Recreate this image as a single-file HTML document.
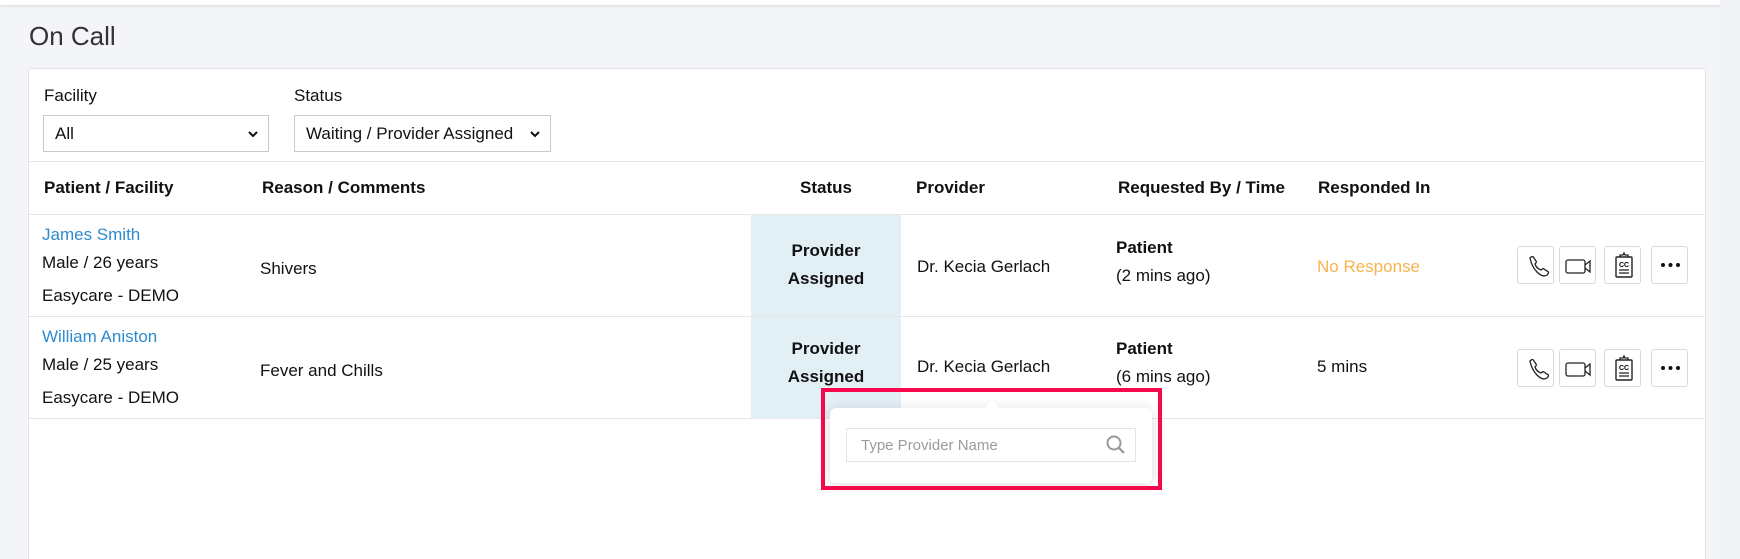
<!DOCTYPE html>
<html style="height:559px;overflow:hidden"><head><style>
*{box-sizing:border-box;margin:0;padding:0}
html,body{width:1740px;height:559px;overflow:hidden}
body{background:#f4f5f8;font-family:"Liberation Sans",sans-serif;color:#111;position:relative;font-size:17px}
.a{position:absolute;white-space:nowrap}
.topbar{position:absolute;left:0;top:0;width:1740px;height:5px;background:#fff;box-shadow:0 1px 3px rgba(0,0,0,.12)}
.card{position:absolute;left:28px;top:68px;width:1678px;height:500px;background:#fff;border:1px solid #e2e4e8;border-radius:3px}
.line{position:absolute;left:29px;width:1676px;height:1px;background:#e6e6e6}
.sel{position:absolute;height:37px;border:1px solid #c9c9c9;background:#fff;font-size:17px;padding:8px 11px}
.sel svg{position:absolute;right:9px;top:14px}
.h{font-weight:bold;font-size:17px}
.link{color:#2f8bd0}
.b{font-weight:bold}
.btn{position:absolute;width:37px;height:38px;border:1px solid #d9d9d9;border-radius:3px;background:#fff}
.btn svg{position:absolute;left:0;top:0}
</style></head><body>
<div class="topbar"></div>
<div class="a" style="left:29px;top:21px;font-size:26px;color:#333">On Call</div>
<div class="card"></div>
<div class="a" style="left:44px;top:86px">Facility</div>
<div class="a" style="left:294px;top:86px">Status</div>
<div class="sel" style="left:43px;top:115px;width:226px">All<svg width="12" height="8" viewBox="0 0 12 8"><path d="M2 2l4 4 4-4" stroke="#111" stroke-width="2" fill="none"/></svg></div>
<div class="sel" style="left:294px;top:115px;width:257px">Waiting / Provider Assigned<svg width="12" height="8" viewBox="0 0 12 8"><path d="M2 2l4 4 4-4" stroke="#111" stroke-width="2" fill="none"/></svg></div>
<div class="line" style="top:161px"></div>
<div class="a h" style="left:44px;top:178px">Patient / Facility</div>
<div class="a h" style="left:262px;top:178px">Reason / Comments</div>
<div class="a h" style="left:800px;top:178px">Status</div>
<div class="a h" style="left:916px;top:178px">Provider</div>
<div class="a h" style="left:1118px;top:178px">Requested By / Time</div>
<div class="a h" style="left:1318px;top:178px">Responded In</div>
<div class="line" style="top:214px"></div>
<div style="position:absolute;left:751px;top:215px;width:150px;height:203px;background:#e2eff5"></div>
<div class="line" style="top:316px"></div>
<div class="line" style="top:418px"></div>

<div class="a link" style="left:42px;top:225px">James Smith</div>
<div class="a" style="left:42px;top:253px">Male / 26 years</div>
<div class="a" style="left:42px;top:286px">Easycare - DEMO</div>
<div class="a" style="left:260px;top:259px">Shivers</div>
<div class="a b" style="left:751px;width:150px;text-align:center;top:237px;line-height:28px">Provider<br>Assigned</div>
<div class="a" style="left:917px;top:257px">Dr. Kecia Gerlach</div>
<div class="a b" style="left:1116px;top:238px">Patient</div>
<div class="a" style="left:1116px;top:266px">(2 mins ago)</div>
<div class="a" style="left:1317px;top:257px;color:#f9b24e">No Response</div>

<div class="a link" style="left:42px;top:327px">William Aniston</div>
<div class="a" style="left:42px;top:355px">Male / 25 years</div>
<div class="a" style="left:42px;top:388px">Easycare - DEMO</div>
<div class="a" style="left:260px;top:361px">Fever and Chills</div>
<div class="a b" style="left:751px;width:150px;text-align:center;top:335px;line-height:28px">Provider<br>Assigned</div>
<div class="a" style="left:917px;top:357px">Dr. Kecia Gerlach</div>
<div class="a b" style="left:1116px;top:339px">Patient</div>
<div class="a" style="left:1116px;top:367px">(6 mins ago)</div>
<div class="a" style="left:1317px;top:357px">5 mins</div>

<div class="btn" style="left:1517px;top:246px"><svg width="37" height="38"><path d="M12 11c2-2 3-2 4 0l2 3c1 1 0 2-1 3 1 3 3 5 6 6 1-1 2-2 3-1l3 2c2 1 2 2 0 4-3 2-6 1-10-3s-6-9-7-14z" stroke="#222" stroke-width="1.3" fill="none"/></svg></div>
<div class="btn" style="left:1559px;top:246px"><svg width="37" height="38"><rect x="6" y="13" width="19" height="13" rx="2" stroke="#222" stroke-width="1.3" fill="none"/><path d="M25 18l5-4v11l-5-4" stroke="#222" stroke-width="1.3" fill="none"/></svg></div>
<div class="btn" style="left:1604px;top:246px"><svg width="37" height="38"><rect x="11" y="10" width="16" height="20" rx="1" stroke="#222" stroke-width="1.4" fill="none"/><path d="M15 10v-2h3l1-2 1 2h3v2" stroke="#222" stroke-width="1.3" fill="none"/><text x="19" y="20" font-size="7" font-weight="bold" text-anchor="middle" font-family="Liberation Sans">CC</text><path d="M14 23h10M14 26h10" stroke="#222" stroke-width="1.2"/></svg></div>
<div class="btn" style="left:1651px;top:246px"><svg width="37" height="38"><circle cx="11" cy="18" r="2" fill="#111"/><circle cx="18.5" cy="18" r="2" fill="#111"/><circle cx="26" cy="18" r="2" fill="#111"/></svg></div>

<div class="btn" style="left:1517px;top:349px"><svg width="37" height="38"><path d="M12 11c2-2 3-2 4 0l2 3c1 1 0 2-1 3 1 3 3 5 6 6 1-1 2-2 3-1l3 2c2 1 2 2 0 4-3 2-6 1-10-3s-6-9-7-14z" stroke="#222" stroke-width="1.3" fill="none"/></svg></div>
<div class="btn" style="left:1559px;top:349px"><svg width="37" height="38"><rect x="6" y="13" width="19" height="13" rx="2" stroke="#222" stroke-width="1.3" fill="none"/><path d="M25 18l5-4v11l-5-4" stroke="#222" stroke-width="1.3" fill="none"/></svg></div>
<div class="btn" style="left:1604px;top:349px"><svg width="37" height="38"><rect x="11" y="10" width="16" height="20" rx="1" stroke="#222" stroke-width="1.4" fill="none"/><path d="M15 10v-2h3l1-2 1 2h3v2" stroke="#222" stroke-width="1.3" fill="none"/><text x="19" y="20" font-size="7" font-weight="bold" text-anchor="middle" font-family="Liberation Sans">CC</text><path d="M14 23h10M14 26h10" stroke="#222" stroke-width="1.2"/></svg></div>
<div class="btn" style="left:1651px;top:349px"><svg width="37" height="38"><circle cx="11" cy="18" r="2" fill="#111"/><circle cx="18.5" cy="18" r="2" fill="#111"/><circle cx="26" cy="18" r="2" fill="#111"/></svg></div>

<div style="position:absolute;left:830px;top:408px;width:322px;height:75px;background:#fff;border-radius:6px;box-shadow:0 2px 14px rgba(0,0,0,.15)"></div>
<div style="position:absolute;left:984px;top:401px;width:0;height:0;border-left:8px solid transparent;border-right:8px solid transparent;border-bottom:7px solid #fff"></div>
<div style="position:absolute;left:846px;top:428px;width:290px;height:34px;border:1px solid #e3e3e3;background:#fff"></div>
<div class="a" style="left:861px;top:437px;font-size:15px;color:#9a9aa0">Type Provider Name</div>
<svg class="a" style="left:1105px;top:434px" width="22" height="22"><circle cx="9" cy="9" r="6.5" stroke="#999" stroke-width="2" fill="none"/><path d="M14 14l5 5" stroke="#999" stroke-width="2.2"/></svg>
<div style="position:absolute;left:821px;top:388px;width:341px;height:102px;border:4px solid #f6084d"></div>
<div style="position:absolute;left:1720px;top:0;width:20px;height:559px;background:#f1f2f5"></div>
</body></html>
